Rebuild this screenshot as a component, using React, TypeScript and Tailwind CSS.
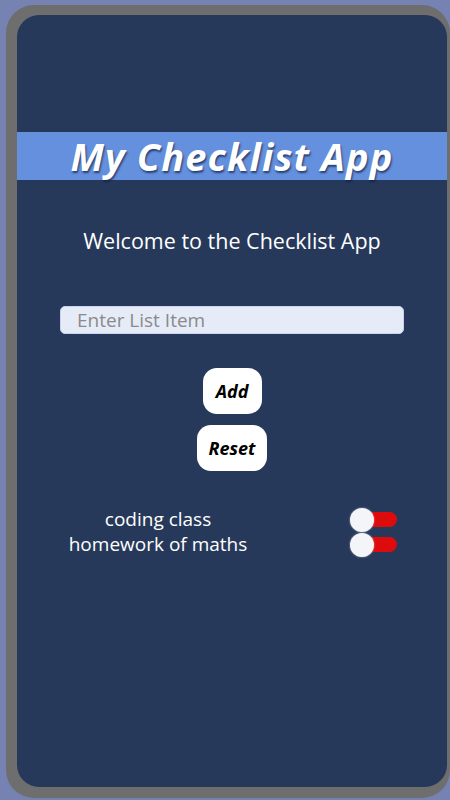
import React, { useState } from 'react';

const items = ['coding class', 'homework of maths'];

function Toggle({ on, onClick }: { on: boolean; onClick: () => void }) {
  return (
    <button onClick={onClick} className="relative flex h-[24px] w-[47px] items-center">
      <span className={`ml-[8px] h-[15px] w-[39px] rounded-full ${on ? 'bg-[#dd0b0b]' : 'bg-[#dd0b0b]'}`} />
      <span className="absolute left-0 top-0 h-[24px] w-[24px] rounded-full bg-[#f4f5f8] shadow-[0_0_2px_rgba(255,255,255,0.6)]" />
    </button>
  );
}

export default function App() {
  const [text, setText] = useState('');
  const [checked, setChecked] = useState(items.map(() => false));

  return (
    <div className="h-[800px] w-[450px] overflow-hidden bg-[#7582b2] pl-[6px] pt-[5px] font-['Open_Sans','Noto_Sans',sans-serif]">
      <div className="h-[793px] w-[444px] rounded-[28px] bg-[#6e6e6e] pb-[11px] pl-[11px] pr-[3px] pt-[10px]">
        <div className="flex h-full w-full flex-col items-center rounded-[22px] bg-[#27395a]">
          <div className="mt-[117px] flex h-[48px] w-full items-center justify-center bg-[#6590de]">
            <h1 className="text-[38px] font-bold italic leading-none tracking-[1.1px] text-white [text-shadow:1px_2px_2px_rgba(10,30,70,0.7)]">
              My Checklist App
            </h1>
          </div>

          <p className="mt-[46px] text-[21.5px] leading-[30px] text-white">Welcome to the Checklist App</p>

          <input
            value={text}
            onChange={(e) => setText(e.target.value)}
            placeholder="Enter List Item"
            className="mt-[50px] h-[28px] w-[344px] rounded-[5px] border border-[#c9d3ea] bg-[#e6ebf8] px-[16px] text-[19px] text-[#333] placeholder:text-[#8a8a8a] focus:outline-none"
          />

          <button className="mt-[34px] h-[46px] w-[59px] rounded-[14px] bg-white text-[18px] font-bold italic text-black">
            Add
          </button>
          <button className="mt-[11px] h-[46px] w-[70px] rounded-[14px] bg-white text-[18px] font-bold italic text-black">
            Reset
          </button>

          <div className="mt-[36px] flex w-full flex-col">
            {items.map((item, i) => (
              <div key={item} className="flex h-[25px] items-center">
                <span className="w-[282px] text-center text-[19px] leading-[25px] text-white">{item}</span>
                <div className="ml-[51px]">
                  <Toggle
                    on={checked[i]}
                    onClick={() => setChecked(checked.map((c, j) => (j === i ? !c : c)))}
                  />
                </div>
              </div>
            ))}
          </div>
        </div>
      </div>
    </div>
  );
}
